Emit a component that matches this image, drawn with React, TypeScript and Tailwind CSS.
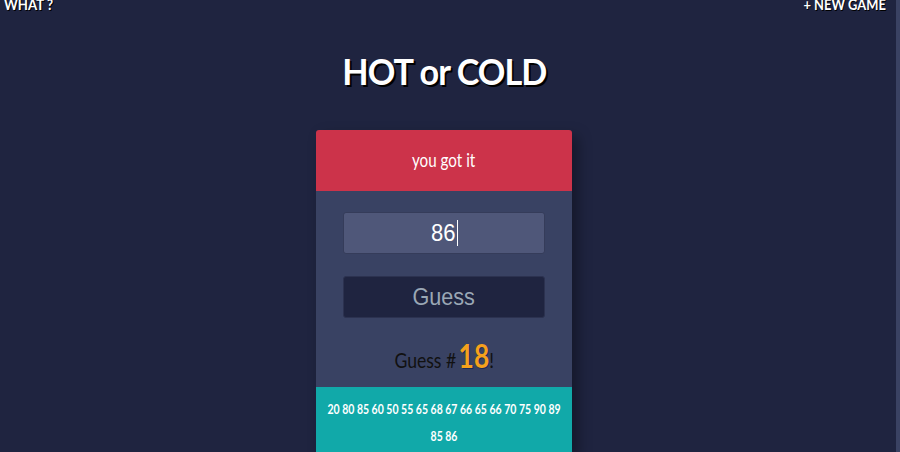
import React from "react";

const history = [20, 80, 85, 60, 50, 55, 65, 68, 67, 66, 65, 66, 70, 75, 90, 89, 85, 86];

export default function App() {
  return (
    <div className="flex h-[452px] w-[900px] overflow-hidden bg-[#1f2440] font-['Lato',sans-serif]">
      <div className="flex flex-1 flex-col pr-[8px]">
        {/* Top nav */}
        <nav className="-mt-[6px] flex h-[20px] items-start justify-between pl-[4px] pr-[2px] text-[15px] font-bold leading-[20px] text-white [text-shadow:1px_1px_0_#000]">
          <a className="inline-block origin-left scale-x-[0.88]">WHAT ?</a>
          <a className="inline-block origin-right scale-x-[0.86]">+ NEW GAME</a>
        </nav>

        <h1 className="mt-[35px] flex justify-center text-[36px] font-bold leading-[44px] tracking-[-1px] text-white [text-shadow:2px_2px_0_#000]">
          <span className="inline-block scale-x-[0.95]">HOT or COLD</span>
        </h1>

        {/* Game card */}
        <section className="mx-auto mt-[37px] w-[256px] overflow-hidden rounded-t-[3px] shadow-[6px_6px_14px_rgba(0,0,0,0.35)]">
          <div className="flex h-[61px] items-center justify-center bg-[#cc334a] text-[19px] text-white">
            <span className="inline-block scale-x-[0.8]">you got it</span>
          </div>
          <div className="flex flex-col items-center bg-[#394263] pb-[6px] pt-[21px]">
            <div className="flex h-[42px] w-[202px] items-center justify-center rounded-[3px] border border-[#353c5a] bg-[#4f5779] font-['Liberation_Sans',sans-serif] text-[24px] text-white">
              <span className="inline-block scale-x-[0.92]">86</span>
              <span className="h-[26px] w-px bg-white" />
            </div>
            <button className="mt-[22px] h-[42px] w-[202px] rounded-[3px] border border-[#2c3250] bg-[#1f2440] font-['Liberation_Sans',sans-serif] text-[24px] text-[#9aa7b5]">
              <span className="inline-block scale-x-[0.9]">Guess</span>
            </button>
            <p className="mt-[13px] flex scale-x-[0.8] items-baseline text-[22px] font-normal text-[#111111]">
              Guess #
              <span className="ml-[3px] text-[33px] font-bold text-[#f5a11c] [text-shadow:1px_1px_0_#1b2a55]">18</span>
              !
            </p>
          </div>
          <div className="flex h-[70px] justify-center bg-[#11a9a9] pt-[8px]">
            <p className="w-[318px] shrink-0 scale-x-[0.75] text-center text-[14px] font-bold leading-[27px] text-white">
              {history.join(" ")}
            </p>
          </div>
        </section>
      </div>
      <div className="w-[4px] bg-[#3a4263]" />
    </div>
  );
}
